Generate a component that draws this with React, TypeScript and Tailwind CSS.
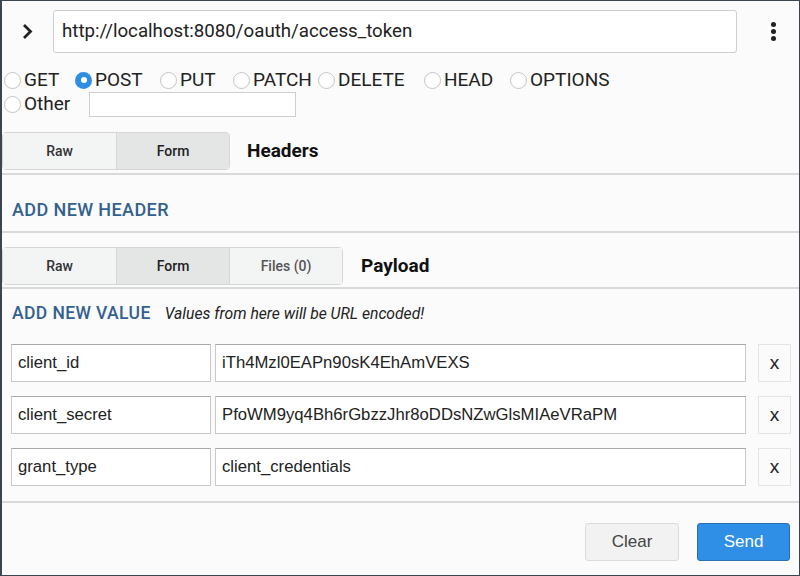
import React from "react";

const methods = ["GET", "POST", "PUT", "PATCH", "DELETE", "HEAD", "OPTIONS"];

const rows = [
  { name: "client_id", value: "iTh4Mzl0EAPn90sK4EhAmVEXS" },
  { name: "client_secret", value: "PfoWM9yq4Bh6rGbzzJhr8oDDsNZwGlsMIAeVRaPM" },
  { name: "grant_type", value: "client_credentials" },
];

function Radio({ checked }: { checked?: boolean }) {
  if (checked) {
    return (
      <span className="w-[17px] h-[17px] rounded-full bg-[#2f8de4] flex items-center justify-center shrink-0">
        <span className="w-[6px] h-[6px] rounded-full bg-white" />
      </span>
    );
  }
  return <span className="w-[17px] h-[17px] rounded-full border border-[#c4c4c4] bg-white shrink-0" />;
}

function Tabs({ tabs, active }: { tabs: string[]; active: string }) {
  return (
    <div className="flex border border-[#d6d6d6] rounded-sm h-[38px]">
      {tabs.map((t, i) => (
        <div
          key={t}
          className={
            "w-[113px] flex items-center justify-center text-[14px] font-medium " +
            (i > 0 ? "border-l border-[#d6d6d6] " : "") +
            (t === active ? "bg-[#e4e5e5] text-[#222]" : "bg-[#f3f4f4] text-[#333]")
          }
        >
          {t.startsWith("Files") ? <span className="text-[#555]">{t}</span> : t}
        </div>
      ))}
    </div>
  );
}

const methodWidth: Record<string, string> = {
  GET: "w-[71px]",
  POST: "w-[85px]",
  PUT: "w-[73px]",
  PATCH: "w-[85px]",
  DELETE: "w-[106px]",
  HEAD: "w-[86px]",
  OPTIONS: "w-[110px]",
};

export default function App() {
  return (
    <div className="w-[800px] h-[576px] bg-[#fbfbfb] border-t border-r border-b border-l-2 border-[#3d4650] font-['Roboto',sans-serif] text-[#222] overflow-hidden flex flex-col">
      {/* URL bar */}
      <div className="flex items-center h-[52px] pt-[9px]">
        <div className="w-[51px] flex justify-center">
          <svg width="11" height="17" viewBox="0 0 11 17">
            <path d="M2 2l6.5 6.5L2 15" fill="none" stroke="#222" strokeWidth="2.8" />
          </svg>
        </div>
        <div className="w-[684px] h-[43px] border border-[#cfcfcf] rounded-[3px] bg-white flex items-center px-[8px] text-[18.7px]">
          http://localhost:8080/oauth/access_token
        </div>
        <div className="flex-1 flex flex-col items-center gap-[2px] pl-[10px]">
          <span className="w-[5px] h-[5px] rounded-full bg-[#222]" />
          <span className="w-[5px] h-[5px] rounded-full bg-[#222]" />
          <span className="w-[5px] h-[5px] rounded-full bg-[#222]" />
        </div>
      </div>

      {/* Methods */}
      <div className="flex items-center h-[24px] mt-[15px] pl-[2px] text-[19px]">
        {methods.map((m) => (
          <div key={m} className={"flex items-center gap-[3px] " + methodWidth[m]}>
            <Radio checked={m === "POST"} />
            <span>{m}</span>
          </div>
        ))}
      </div>
      <div className="flex items-center h-[26px] -mt-[1px] pl-[2px] text-[19px]">
        <div className="flex items-center gap-[3px] w-[85px]">
          <Radio />
          <span>Other</span>
        </div>
        <div className="w-[207px] h-[25px] border border-[#cfcfcf] bg-white" />
      </div>

      {/* Headers */}
      <div className="flex items-center mt-[15px]">
        <Tabs tabs={["Raw", "Form"]} active="Form" />
        <span className="ml-[17px] text-[19px] font-bold text-[#111]">Headers</span>
      </div>
      <div className="border-t-2 border-[#d9d9d9] mt-[3px] h-[58px] pt-[21px] pl-[10px]">
        <span className="text-[18px] font-medium tracking-[0.4px] text-[#33618e]">ADD NEW HEADER</span>
      </div>

      {/* Payload */}
      <div className="border-t-2 border-[#d9d9d9] pt-[14px] flex items-center">
        <Tabs tabs={["Raw", "Form", "Files (0)"]} active="Form" />
        <span className="ml-[18px] text-[19px] font-bold text-[#111]">Payload</span>
      </div>
      <div className="border-t-2 border-[#d9d9d9] mt-[2px] h-[50px] flex items-center pl-[10px] pt-[1px]">
        <span className="text-[17.5px] font-medium tracking-[0.4px] text-[#33618e]">ADD NEW VALUE</span>
        <span className="ml-[14px] text-[15.7px] italic text-[#222]">Values from here will be URL encoded!</span>
      </div>

      <div className="flex flex-col gap-[14px] pl-[9px] pr-[8px] pt-[7px] pb-[15px] font-['Liberation_Sans',Arial,sans-serif] text-[16.7px]">
        {rows.map((r) => (
          <div key={r.name} className="flex items-center h-[38px]">
            <div className="w-[200px] shrink-0 h-[38px] border border-[#c9c9c9] border-t-[#a9a9a9] bg-white flex items-center px-[6px]">
              {r.name}
            </div>
            <div className="w-[531px] shrink-0 ml-[4px] h-[38px] border border-[#c9c9c9] border-t-[#a9a9a9] bg-white flex items-center px-[6px]">
              {r.value}
            </div>
            <div className="w-[33px] shrink-0 ml-[12px] h-[38px] border border-[#e4e4e4] bg-[#fbfbfb] flex items-center justify-center text-[19px]">
              x
            </div>
          </div>
        ))}
      </div>

      {/* Footer */}
      <div className="border-t-2 border-[#d9d9d9] flex-1 flex items-start justify-end pt-[20px] pr-[9px] gap-[18px] font-['Liberation_Sans',Arial,sans-serif] text-[17px]">
        <button className="w-[94px] h-[38px] rounded-[3px] border border-[#dcdcdc] bg-[#f2f2f2] text-[#444]">Clear</button>
        <button className="w-[93px] h-[38px] rounded-[3px] border border-[#2a6fb4] bg-[#2f8fe6] text-white">Send</button>
      </div>
    </div>
  );
}
